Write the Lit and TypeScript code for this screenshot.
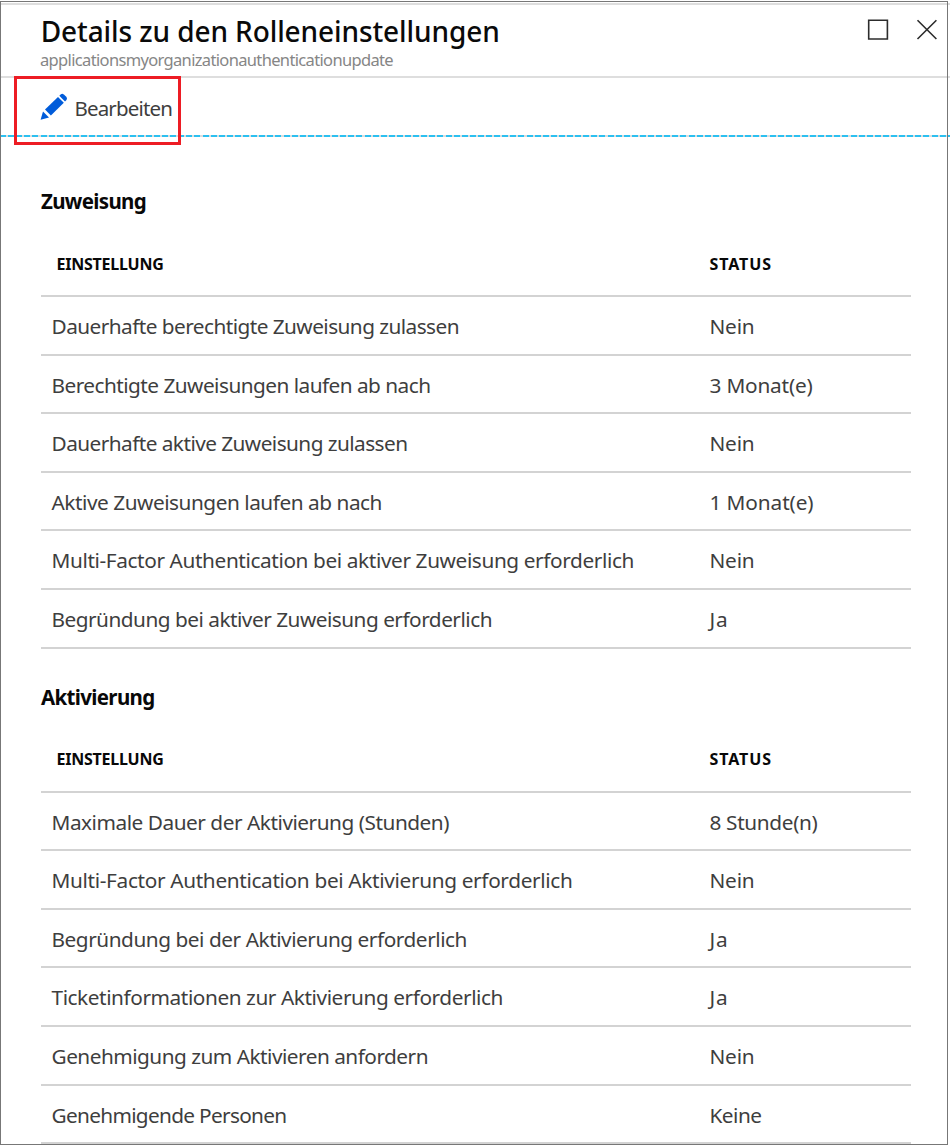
import { LitElement, html, css } from "lit";
import { customElement, property, state } from "lit/decorators.js";

type Cell = [text: string, width: number];
interface Group { title: Cell; rows: [Cell, Cell][]; }

const groups: Group[] = [
  {
    title: ["Zuweisung", 105],
    rows: [
      [["Dauerhafte berechtigte Zuweisung zulassen", 407.5], ["Nein", 45]],
      [["Berechtigte Zuweisungen laufen ab nach", 379], ["3 Monat(e)", 103]],
      [["Dauerhafte aktive Zuweisung zulassen", 356], ["Nein", 45]],
      [["Aktive Zuweisungen laufen ab nach", 330.5], ["1 Monat(e)", 104]],
      [["Multi-Factor Authentication bei aktiver Zuweisung erforderlich", 582.5], ["Nein", 45]],
      [["Begründung bei aktiver Zuweisung erforderlich", 440.5], ["Ja", 19]],
    ],
  },
  {
    title: ["Aktivierung", 113.5],
    rows: [
      [["Maximale Dauer der Aktivierung (Stunden)", 397.5], ["8 Stunde(n)", 108]],
      [["Multi-Factor Authentication bei Aktivierung erforderlich", 521], ["Nein", 45]],
      [["Begründung bei der Aktivierung erforderlich", 415.5], ["Ja", 19]],
      [["Ticketinformationen zur Aktivierung erforderlich", 451.5], ["Ja", 19]],
      [["Genehmigung zum Aktivieren anfordern", 376.5], ["Nein", 45]],
      [["Genehmigende Personen", 235], ["Keine", 52]],
    ],
  },
];

/* A single line of text tracked so that it takes a given width. */
@customElement("fit-text")
class FitText extends LitElement {
  static styles = css`
    :host { display: inline-block; white-space: pre; }
  `;
  @property() text = "";
  @property({ type: Number }) width = 0;
  @state() tracking = 0;

  firstUpdated() {
    const natural = this.getBoundingClientRect().width;
    this.tracking = (this.width - natural) / this.text.length;
  }

  render() {
    return html`<span style="letter-spacing:${this.tracking}px">${this.text}</span>`;
  }
}

const fit = ([text, width]: Cell) => html`<fit-text .text=${text} .width=${width}></fit-text>`;

@customElement("app-root")
class AppRoot extends LitElement {
  static styles = css`
    :host {
      display: block;
      position: relative;
      box-sizing: border-box;
      width: 950px;
      height: 1147px;
      overflow: hidden;
      background: #fff;
      color: #3e3e3e;
      font: 20.5px/28px "Noto Sans", "Open Sans", sans-serif;
    }
    .frame {
      position: absolute;
      inset: 1px 2px 2px 0;
      border: 1px solid #777;
      pointer-events: none;
    }
    .header {
      display: flex;
      justify-content: space-between;
      box-sizing: border-box;
      height: 75px;
      margin-top: 3px;
      padding: 0 12px 0 40px;
      border-top: 2px solid #dedede;
      border-bottom: 2px solid #dedede;
    }
    .wrap { padding-top: 3px; }
    .title {
      height: 42px;
      padding: 4px 0 0 0.7px;
      box-sizing: border-box;
      font-size: 28px;
      line-height: 38px;
      font-weight: 500;
      color: #0a0a0a;
    }
    .sub { font-size: 16.5px; line-height: 20px; color: #868686; }
    .tools { display: flex; gap: 27px; padding-top: 14px; }
    .tools svg, .edit svg { display: block; }
    .toolbar {
      box-sizing: border-box;
      height: 59px;
      padding: 0 0 0 14px;
    }
    .edit {
      display: flex;
      align-items: center;
      position: relative;
      z-index: 1;
      box-sizing: border-box;
      width: 167px;
      height: 69px;
      margin-top: -2px;
      padding: 0 0 4px 23px;
      border: 3px solid #ed1c24;
    }
    .edit svg { margin-bottom: 4px; }
    .edit fit-text { margin: 0 0 2px 6.5px; }
    .dashes {
      height: 2px;
      background: repeating-linear-gradient(90deg, #2cc0f0 0 6px, #dcdcdc 6px 8.1px);
    }
    .body { padding: 0 39px 0 41px; }
    .group { height: 495.6px; }
    h2 {
      box-sizing: border-box;
      height: 99px;
      margin: 0;
      padding-top: 50px;
      font-size: 20.5px;
      line-height: 28px;
      font-weight: 700;
      color: #080808;
    }
    .row {
      display: grid;
      grid-template-columns: 658px 1fr;
      align-items: center;
      box-sizing: border-box;
      height: 58.6px;
      padding: 1.6px 0 0 10.5px;
      border-bottom: 2px solid #d3d3d3;
      font-size: 20.8px;
    }
    .head {
      height: 61px;
      grid-template-columns: 653px 1fr;
      padding: 0 0 4px 15.5px;
      font-size: 16px;
      font-weight: 700;
      color: #080808;
    }
  `;

  render() {
    return html`
      <div class="header">
        <div class="wrap">
          <div class="title">${fit(["Details zu den Rolleneinstellungen", 459])}</div>
          <div class="sub">${fit(["applicationsmyorganizationauthenticationupdate", 353])}</div>
        </div>
        <div class="tools">
          <svg width="22" height="22" viewBox="0 0 22 22" fill="none" stroke="#2c2c2c" stroke-width="1.6">
            <path d="M1.7 1.3H20.4V20H1.7Z" />
          </svg>
          <svg width="22" height="22" viewBox="0 0 22 22" fill="none" stroke="#2c2c2c" stroke-width="1.6">
            <path d="M1.5 1.2L20.4 20M20.4 1.2L1.5 20" />
          </svg>
        </div>
      </div>
      <div class="toolbar">
        <div class="edit">
          <svg width="28" height="28" viewBox="0 0 28 28" fill="#015cda">
            <path d="M.6 26.8L3 18.6L9 24.4Z" />
            <path d="M5 16.6L18 4L23.8 9.8L10.9 22.6Z" />
            <path d="M19.3 2.8L20.9 1.3Q22.3 .2 23.8 1.4L26.3 3.8Q27.6 5.4 26.5 6.9L25 8.5Z" />
          </svg>
          ${fit(["Bearbeiten", 97.5])}
        </div>
      </div>
      <div class="dashes"></div>
      <div class="body">
        ${groups.map(
          (g) => html`<section class="group">
            <h2>${fit(g.title)}</h2>
            <div class="row head"><div>${fit(["EINSTELLUNG", 107])}</div><div>${fit(["STATUS", 62.5])}</div></div>
            ${g.rows.map(([a, b]) => html`<div class="row"><div>${fit(a)}</div><div>${fit(b)}</div></div>`)}
          </section>`
        )}
      </div>
      <div class="frame"></div>
    `;
  }
}
